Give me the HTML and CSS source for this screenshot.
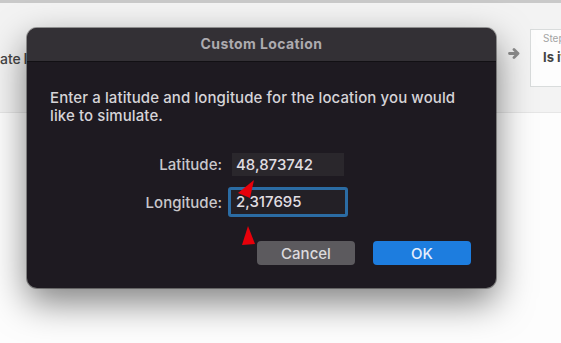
FILE: index.html
```html
<!DOCTYPE html>
<html>
<head>
<meta charset="utf-8">
<link rel="stylesheet" href="styles.css">
</head>
<body>
<div class="page">
  <div class="band">
    <div class="crumb">ate I</div>
    <div class="spacer"></div>
    <svg class="next" width="12" height="11" viewBox="0 0 12 11"><path d="M1.5 5.5H10M6 1.5L10 5.5L6 9.5" fill="none" stroke="#8d8d8d" stroke-width="2.8" stroke-linecap="round" stroke-linejoin="round"/></svg>
    <div class="step">
      <div class="step-label">Step</div>
      <div class="step-title">Is it</div>
    </div>
  </div>

  <div class="dialog">
    <div class="titlebar">Custom Location</div>
    <div class="body">
      <p class="msg">Enter a latitude and longitude for the location you would like to simulate.</p>
      <div class="fields">
        <div class="row">
          <span class="label">Latitude:</span>
          <div class="input">48,873742</div>
        </div>
        <div class="row">
          <span class="label">Longitude:</span>
          <div class="input focused">2,317695</div>
        </div>
      </div>
      <div class="buttons">
        <div class="btn cancel">Cancel</div>
        <div class="btn ok">OK</div>
      </div>
    </div>
  </div>

  <svg class="marks" width="561" height="343" viewBox="0 0 561 343">
    <polygon points="238,193 254,180 250,198" fill="#e8000a"/>
    <polygon points="248,226 242,245 255,244" fill="#e8000a"/>
  </svg>
</div>
</body>
</html>
```

FILE: styles.css
```css
html, body {
  margin: 0;
  padding: 0;
  background: #fdfdfd;
}
.page {
  position: relative;
  width: 561px;
  height: 343px;
  overflow: hidden;
  font-family: Inter, "Liberation Sans", Arial, sans-serif;
}
.band {
  box-sizing: border-box;
  height: 113px;
  border-top: 3px solid #c9c9c9;
  border-bottom: 1px solid #e6e6e6;
  background: #f3f3f3;
  display: flex;
  align-items: flex-start;
  padding-top: 26px;
}
.crumb {
  font-size: 14px;
  font-weight: 500;
  color: #444;
  margin-top: 21px;
  white-space: nowrap;
  word-spacing: -1px;
}
.spacer { flex: 1; }
.next {
  margin-top: 19px;
  margin-right: 10px;
}
.step {
  box-sizing: border-box;
  width: 31px;
  height: 58px;
  border: 1px solid #d9dcdc;
  border-right: none;
  background: #fdfdfd;
  padding: 2px 0 0 12px;
  white-space: nowrap;
  overflow: hidden;
}
.step-label {
  font-size: 10px;
  color: #a4a4a4;
  line-height: 12px;
}
.step-title {
  font-size: 13px;
  font-weight: bold;
  color: #444;
  margin-top: 5px;
}
.dialog {
  position: absolute;
  left: 27px;
  top: 28px;
  width: 469px;
  height: 260px;
  border-radius: 10px;
  overflow: hidden;
  background: #1e1a21;
  box-shadow: 0 14px 36px rgba(0,0,0,0.5), 0 0 0 1px rgba(0,0,0,0.35);
  display: flex;
  flex-direction: column;
}
.titlebar {
  height: 34px;
  flex: none;
  background: #333035;
  border-bottom: 1px solid #121014;
  box-sizing: border-box;
  color: #adabaf;
  font-weight: 700;
  font-size: 14px;
  letter-spacing: 0.4px;
  display: flex;
  align-items: center;
  justify-content: center;
  padding-bottom: 2px;
}
.body {
  padding: 27px 23px 0;
  color: #d6d4d8;
  font-size: 15px;
  font-weight: 500;
}
.msg {
  margin: 0;
  line-height: 18px;
  width: 420px;
  letter-spacing: 0.1px;
}
.fields {
  display: flex;
  flex-direction: column;
  gap: 11px;
  margin-top: 28px;
}
.row {
  display: flex;
  align-items: center;
}
.label {
  width: 172px;
  text-align: right;
  color: #c9c7cb;
  margin-right: 10px;
}
.input {
  box-sizing: border-box;
  width: 112px;
  height: 23px;
  background: #2a272c;
  color: #e0dee2;
  padding: 0 4px;
  line-height: 23px;
  font-size: 15px;
}
.input.focused {
  margin-left: -4px;
  width: 120px;
  height: 30px;
  line-height: 24px;
  border: 3px solid #2b6ca4;
  border-radius: 3px;
  padding: 0 5px;
  background: #232026;
}
.buttons {
  display: flex;
  justify-content: flex-end;
  gap: 18px;
  margin-top: 24px;
  padding-right: 2px;
}
.btn {
  width: 98px;
  height: 24px;
  border-radius: 4px;
  font-size: 15px;
  display: flex;
  align-items: center;
  justify-content: center;
}
.cancel {
  background: #5c5a5e;
  color: #dcdadd;
}
.ok {
  background: #1d7ddf;
  color: #e6eefb;
}
.marks {
  position: absolute;
  left: 0;
  top: 0;
}
```
